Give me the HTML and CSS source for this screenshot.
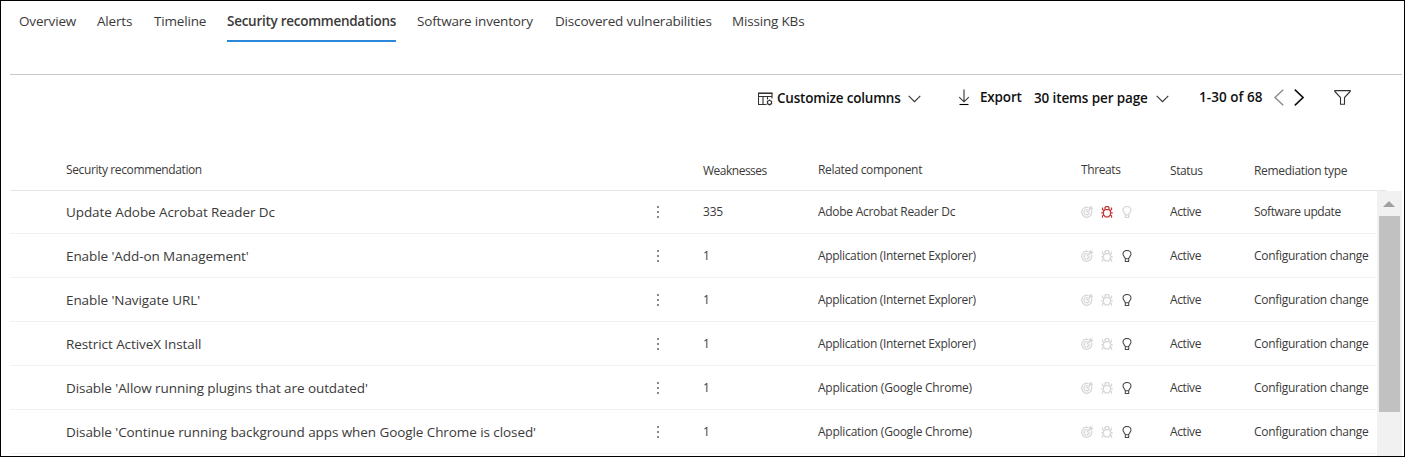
FILE: index.html
```html
<!DOCTYPE html>
<html lang="en">
<head>
<meta charset="utf-8">
<title>Security recommendations</title>
<link rel="stylesheet" href="styles.css">
</head>
<body>
<svg class="defs" width="0" height="0">
  <symbol id="target" viewBox="0 0 12 12"><path d="M7.500 1.600A5 5 0 1 0 10.400 4.500M6.500 3.900A2.600 2.600 0 1 0 8.100 5.700M5.500 6.500L9.200 2.800M8.600 3.400V1.700L10 .6v1.500h1.600L10.400 3.400z"/></symbol>
  <symbol id="bug" viewBox="0 0 12 12"><path d="M4 3.500h4L9.500 5.300v3.200L7.700 10.900H4.300L2.500 8.500V5.300zM4 3.500V1.500L4.800.6h2.400L8 1.500v2M1.500 1.500v2l1.500 1.200M10.500 1.500v2L9 4.700M.2 6.800h2.300M9.500 6.800h2.300M1.500 11.800v-2l1.500-1M10.500 11.800v-2L9 8.800"/></symbol>
  <symbol id="bulb" viewBox="0 0 12 12"><path d="M4.300 8.800C4.300 7.200 2 6.300 2 4.100a4 3.700 0 0 1 8 0c0 2.200-2.300 3.100-2.300 4.700zM4.300 8.800v2.700h3.400v-2.700"/></symbol>
</svg>
<div class="page">
  <nav class="tabs">
    <a class="tab t1">Overview</a><a class="tab t2">Alerts</a><a class="tab t3">Timeline</a><a class="tab t4 active">Security recommendations</a><a class="tab t5">Software inventory</a><a class="tab t6">Discovered vulnerabilities</a><a class="tab t7">Missing KBs</a>
  </nav>
  <div class="toolbar">
    <svg class="ic-cols" width="16" height="14" viewBox="0 0 16 14"><path d="M8.500 12.500H.5V1.500h13.500v5M.5 4.500H14M5 4.500v8M9.500 4.500v3" /><path class="top" d="M0 1.200h14.500"/><circle cx="11.500" cy="10.500" r="2"/><path d="M11.500 7.500v1M11.500 12.500v1M8.800 9l1 .6M13.200 9.600l1-.6M8.800 12l1-.6M13.200 11.400l1 .6"/></svg>
    <span class="customize">Customize columns</span>
    <svg class="ic-chev1" width="13" height="8" viewBox="0 0 13 8"><path d="M.7.8l5.800 5.800L12.300.8"/></svg>
    <svg class="ic-export" width="12" height="17" viewBox="0 0 12 17"><path d="M6 .5v12M1.200 8.200L6 12.800l4.800-4.600"/><path class="base" d="M1.500 15.500h9"/></svg>
    <span class="export">Export</span>
    <span class="perpage">30 items per page</span>
    <svg class="ic-chev2" width="13" height="8" viewBox="0 0 13 8"><path d="M.7.8l5.800 5.800L12.300.8"/></svg>
    <span class="range">1-30 of 68</span>
    <svg class="ic-prev" width="10" height="17" viewBox="0 0 10 17"><path d="M9.200.7L1 8.500l8.200 7.800"/></svg>
    <svg class="ic-next" width="10" height="17" viewBox="0 0 10 17"><path d="M.8.7L9 8.500.8 16.300"/></svg>
    <svg class="ic-filter" width="17" height="15" viewBox="0 0 17 15"><path d="M.8.600h15.400v.9l-5.700 6v6.800h-4V7.500l-5.700-6z"/></svg>
  </div>
  <div class="row head">
    <span class="h-name">Security recommendation</span><span></span><span class="low h-weak">Weaknesses</span><span class="h-comp">Related component</span><span class="h-threat">Threats</span><span class="low status">Status</span><span class="low h-rem">Remediation type</span>
  </div>
  <div class="table">
    <div class="rows">
      <div class="row first">
        <span class="name n1">Update Adobe Acrobat Reader Dc</span><span class="dots"><i></i><i></i><i></i></span><span>335</span><span class="adobe">Adobe Acrobat Reader Dc</span>
        <span class="threats"><svg><use href="#target"/></svg><svg class="red"><use href="#bug"/></svg><svg><use href="#bulb"/></svg></span><span class="status">Active</span><span class="software">Software update</span>
      </div>
      <div class="row">
        <span class="name n2">Enable 'Add-on Management'</span><span class="dots"><i></i><i></i><i></i></span><span>1</span><span class="ie">Application (Internet Explorer)</span>
        <span class="threats"><svg><use href="#target"/></svg><svg><use href="#bug"/></svg><svg class="dark"><use href="#bulb"/></svg></span><span class="status">Active</span><span class="config">Configuration change</span>
      </div>
      <div class="row">
        <span class="name n3">Enable 'Navigate URL'</span><span class="dots"><i></i><i></i><i></i></span><span>1</span><span class="ie">Application (Internet Explorer)</span>
        <span class="threats"><svg><use href="#target"/></svg><svg><use href="#bug"/></svg><svg class="dark"><use href="#bulb"/></svg></span><span class="status">Active</span><span class="config">Configuration change</span>
      </div>
      <div class="row">
        <span class="name n4">Restrict ActiveX Install</span><span class="dots"><i></i><i></i><i></i></span><span>1</span><span class="ie">Application (Internet Explorer)</span>
        <span class="threats"><svg><use href="#target"/></svg><svg><use href="#bug"/></svg><svg class="dark"><use href="#bulb"/></svg></span><span class="status">Active</span><span class="config">Configuration change</span>
      </div>
      <div class="row">
        <span class="name n5">Disable 'Allow running plugins that are outdated'</span><span class="dots"><i></i><i></i><i></i></span><span>1</span><span class="chrome">Application (Google Chrome)</span>
        <span class="threats"><svg><use href="#target"/></svg><svg><use href="#bug"/></svg><svg class="dark"><use href="#bulb"/></svg></span><span class="status">Active</span><span class="config">Configuration change</span>
      </div>
      <div class="row">
        <span class="name n6">Disable 'Continue running background apps when Google Chrome is closed'</span><span class="dots"><i></i><i></i><i></i></span><span>1</span><span class="chrome">Application (Google Chrome)</span>
        <span class="threats"><svg><use href="#target"/></svg><svg><use href="#bug"/></svg><svg class="dark"><use href="#bulb"/></svg></span><span class="status">Active</span><span class="config">Configuration change</span>
      </div>
    </div>
    <div class="scrollbar"><svg class="up" width="12" height="6" viewBox="0 0 12 6"><path d="M6 0l6 6H0z"/></svg><div class="thumb"></div></div>
  </div>
</div>
</body>
</html>
```
FILE: styles.css
```css
* { box-sizing: border-box; }
body { margin: 0; background: #fff; font-family: "Open Sans", "Noto Sans", sans-serif; color: #3b3a39; }
.defs { display: block; position: absolute; }
.page { width: 1405px; height: 457px; border: 1px solid #000; overflow: hidden; }
svg { fill: none; stroke: #333; flex: none; display: block; }

.tabs { height: 74px; margin: 0 2px 0 9px; padding-left: 9px; border-bottom: 1px solid #c8c8c8; display: flex; align-items: flex-start; gap: 21px; }
.tab { height: 41px; padding-top: 10px; font-size: 13.5px; line-height: 20px; white-space: nowrap; letter-spacing: -0.18px; }
.tab.active { font-weight: 600; letter-spacing: -0.27px; border-bottom: 2px solid #2b88d8; }
.t1 { width: 57px; }
.t2 { width: 36px; }
.t3 { width: 52px; }
.t4 { width: 169px; }
.t5 { width: 117px; }
.t6 { width: 156px; }

.toolbar { height: 45px; padding-left: 757px; display: flex; align-items: center; font-size: 13.5px; font-weight: 600; color: #111; white-space: nowrap; letter-spacing: -0.18px; }
.toolbar svg { stroke-width: 1.1; }
.toolbar span { line-height: 20px; }
.ic-cols { margin: 2px 3px 0 0; }
.ic-cols .top { stroke-width: 1.5; }
.customize { width: 124px; margin: 1px 7px 0 0; letter-spacing: -0.2px; }
.ic-chev1 { margin: 2px 37px 0 0; }
.ic-export { margin: 0 10px 1px 0; }
.ic-export .base { stroke: #000; }
.export { width: 42px; margin: 0 12px 2px 0; }
.perpage { width: 114px; margin: 1px 8px 0 0; letter-spacing: -0.12px; }
.ic-chev2 { margin: 2px 30px 0 0; }
.range { width: 64px; margin: 0 11px 2px 0; letter-spacing: 0.05px; }
.ic-prev { margin-right: 10px; }
.toolbar .ic-prev { stroke: #8a8a8a; stroke-width: 1.4; }
.toolbar .ic-next { margin-right: 30px; stroke: #111; stroke-width: 1.6; }

.row { display: grid; grid-template-columns: 591px 46px 115px 263px 89px 84px 1fr; align-items: center; height: 44px; margin-left: 9px; padding-left: 56px; border-bottom: 1px solid #f3f2f1; font-size: 12px; line-height: 18px; white-space: nowrap; letter-spacing: -0.2px; }
.head { height: 71px; width: 1376px; padding-top: 30px; border-color: #e6e6e6; }
.low { padding-top: 1px; }
.h-name { letter-spacing: -0.38px; }
.h-weak { letter-spacing: -0.5px; }
.h-comp, .ie { letter-spacing: -0.33px; }
.h-threat, .status { letter-spacing: -0.4px; }
.h-rem { letter-spacing: -0.33px; }
.adobe, .config { letter-spacing: -0.28px; }
.software { letter-spacing: -0.38px; }
.chrome { letter-spacing: -0.24px; }
.table { display: flex; height: 265px; }
.rows { width: 1376px; }
.row.first { height: 43px; }
.name { font-size: 13.5px; letter-spacing: -0.08px; }
.dots { display: flex; flex-direction: column; gap: 3px; }
.dots i { width: 2px; height: 2px; background: #888; }
.threats { display: flex; gap: 8px; }
.threats svg { width: 12px; height: 12px; stroke: #d8d6d4; stroke-width: 1.25; }
.threats .red { stroke: #c43a3a; }
.threats .dark { stroke: #484848; stroke-width: 1.05; }

.scrollbar { width: 25px; background: #f1f1f1; }
.up { margin: 10px 0 9px 6px; fill: #a0a0a0; stroke: none; }
.thumb { width: 21px; height: 196px; margin-left: 2px; background: #c1c1c1; }
```
